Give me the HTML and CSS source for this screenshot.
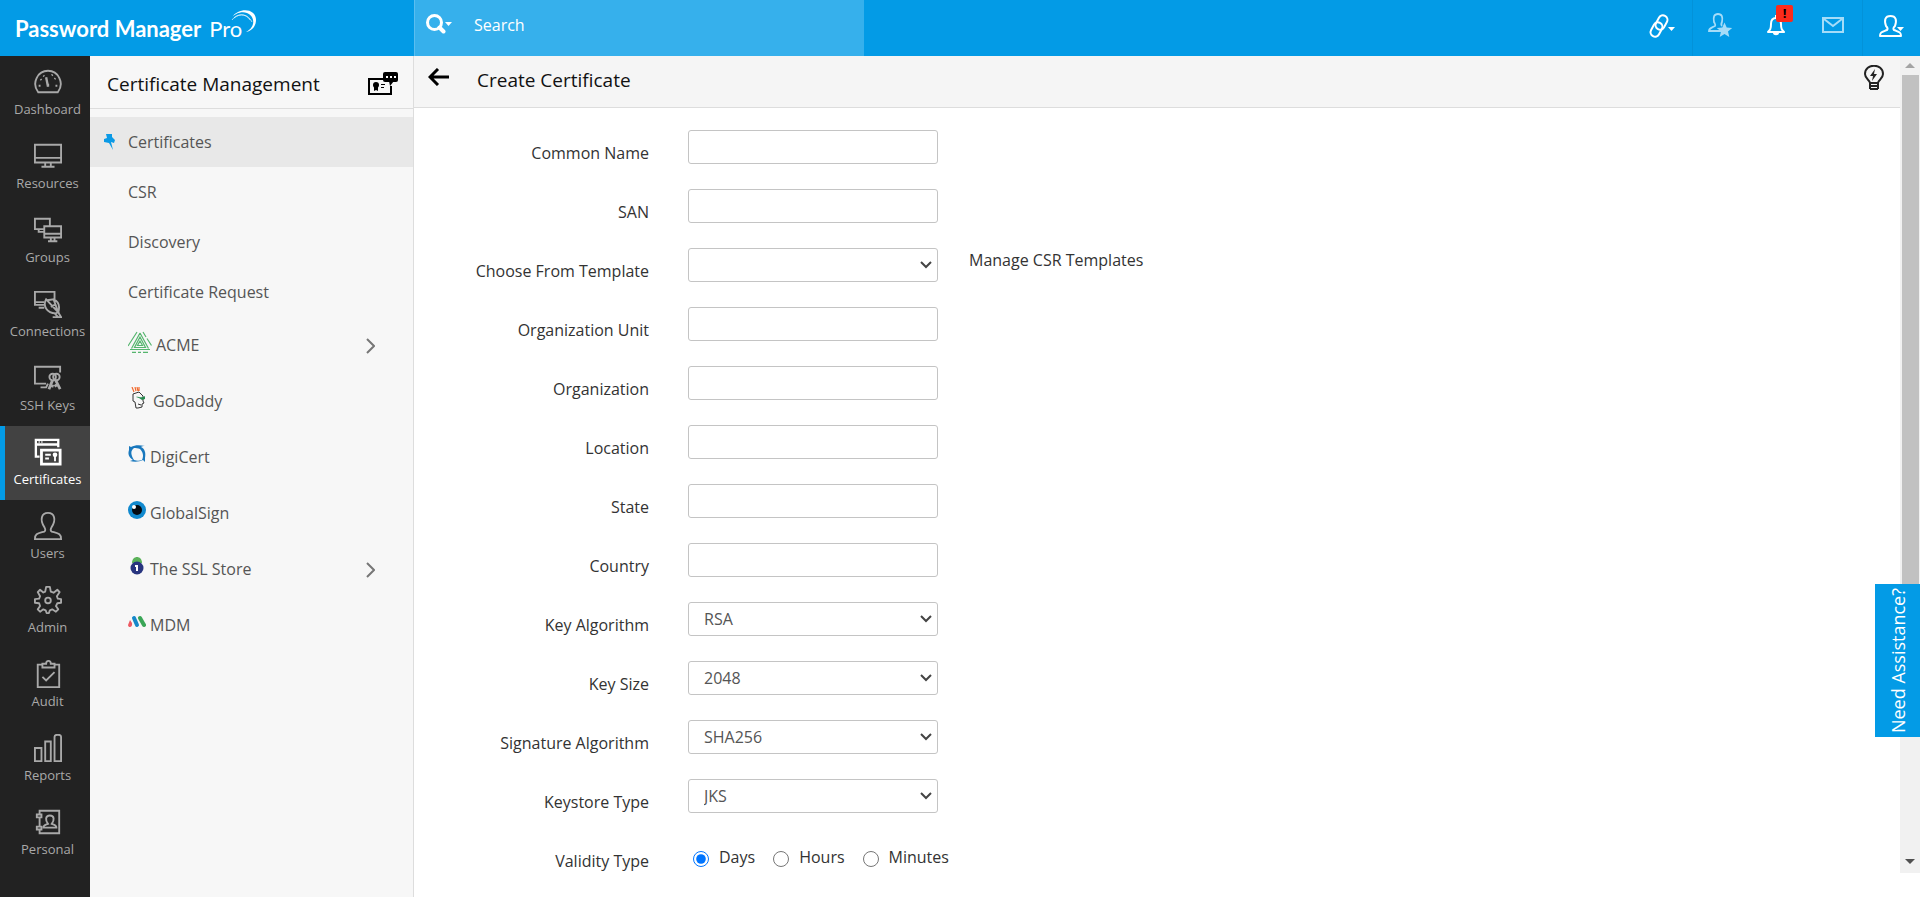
FILE: index.html
```html
<!DOCTYPE html>
<html lang="en">
  <head>
    <meta charset="utf-8" />
    <title>Password Manager Pro</title>
    <link rel="stylesheet" href="styles.css">
  </head>

  <body>
    <header class="topbar">
      <a class="logo" href="#">
        <b>Password Manager</b><span>Pro</span>
        <svg class="logo-swoosh" width="28" height="26" viewBox="0 0 28 26" fill="none" stroke="#fff">
          <path d="M2 8C9-2 26-1 26 11c0 6-4 11-10 12 10-5 9-16 1-19C11 2 5 5 2 8z" fill="#fff" stroke="none" />
          <path d="M2 11C7 4 16 4 20 11M4 9c6-5 14-4 18 4" stroke-width=".8" opacity=".8" />
        </svg>
      </a>
      <div class="search">
        <button class="search-type" aria-label="Search type">
          <svg width="26" height="20" viewBox="0 0 26 20" fill="none" stroke="#fff">
            <circle cx="8.500" cy="8.500" r="7" stroke-width="3" />
            <path d="M13.500 13.500l4 4" stroke-width="4" stroke-linecap="round" />
            <path d="M19 8h7l-3.500 4z" fill="#fff" stroke="none" />
          </svg>
        </button>
        <input class="search-input" type="text" placeholder="Search" aria-label="Search">
      </div>
      <div class="top-actions">
        <button class="top-btn link-btn" aria-label="Links">
          <svg width="26" height="25" viewBox="0 0 26 25" fill="none" stroke="#fff" stroke-width="2">
            <rect x="8" y="1" width="9" height="15" rx="4.500" transform="rotate(28 12.500 8.500)" />
            <rect x="3" y="8" width="9" height="15" rx="4.500" transform="rotate(28 7.500 15.500)" />
            <path d="M19 13h7l-3.500 4z" fill="#fff" stroke="none" />
          </svg>
        </button>
        <button class="top-btn star-btn" aria-label="Favourites">
          <svg width="26" height="25" viewBox="0 0 26 25" fill="none" stroke="#a5dcf8" stroke-width="1.800">
            <path d="M14 18H1c0-3 2-3 6-5 1-1 0-2-1-4-1-5 0-8 4-8s5 3 4 8c-1 2-1 3 0 4" />
            <path d="M16.500 9.500l2.200 5 5.500.5-4.200 3.600 1.300 5.400-4.800-2.900-4.800 2.900 1.300-5.400-4.200-3.600 5.500-.5z" fill="#a5dcf8" stroke="none" />
          </svg>
        </button>
        <button class="top-btn bell-btn" aria-label="Notifications">
          <svg width="18" height="22" viewBox="0 0 18 22" fill="none" stroke="#fff" stroke-width="2">
            <path d="M1 18c2-2 3-3 3-8 0-4 2-6 5-6s5 2 5 6c0 5 1 6 3 8z" stroke-linejoin="round" />
            <path d="M9 4V1" />
            <path d="M6 19h6c0 3-6 3-6 0z" fill="#fff" stroke="none" />
          </svg>
          <span class="badge">!</span>
        </button>
        <button class="top-btn mail-btn" aria-label="Messages">
          <svg width="22" height="16" viewBox="0 0 22 16" fill="none" stroke="#a5dcf8" stroke-width="2">
            <path d="M1 1h20v14H1zM2 2l9 7 9-7" />
          </svg>
        </button>
        <button class="top-btn user-btn" aria-label="Account">
          <svg width="26" height="23" viewBox="0 0 26 23" fill="none" stroke="#fff" stroke-width="2">
            <path d="M1 21c0-4 2-4 7-6 1-1 1-2-1-4C5 5 6 1 11.500 1S18 5 16 11c-2 2-2 3-1 4 5 2 7 2 7 6z" stroke-linejoin="round" />
            <path d="M18 12h7l-3.500 4z" fill="#fff" stroke="none" />
          </svg>
        </button>
      </div>
    </header>

    <div class="page">
      <nav class="sidebar">
        <a class="nav-item" href="#">
          <svg class="nav-icon" viewBox="0 0 30 30">
            <path d="M4.500 26C-3 16 4 3 15 3s18 13 10.500 23z" />
            <path d="M13 10l2 10M15 17v3" stroke-width="2.500" />
            <path d="M5 19h2M23 19h2M7 12l1 1M22 12l1-1M10 8l1 1M19 8l1-1" />
          </svg>
          Dashboard
        </a>
        <a class="nav-item" href="#">
          <svg class="nav-icon" viewBox="0 0 30 30">
            <path d="M1 3h28v19H1zM1 17h28M12 22v4M18 22v4M8 26.500h14" />
          </svg>
          Resources
        </a>
        <a class="nav-item" href="#">
          <svg class="nav-icon" viewBox="0 0 30 30">
            <path d="M10 14H1V3h16v7M5 14v3h5M11 11h18v12H11zM11 19h18M18 23v3M22 23v3M15 27h10" />
          </svg>
          Groups
        </a>
        <a class="nav-item" href="#">
          <svg class="nav-icon" viewBox="0 0 30 30">
            <path d="M11 16H1V2h21v8M1 13h10M5 19h6" />
            <path d="M13 10c-4 7 1 15 10 15l3-1zM14 11l7-1 5 14M21 10c5 2 7 7 5 14M22 25l4 4M20 29h9l-3-5M18 18l4-2" />
          </svg>
          Connections
        </a>
        <a class="nav-item" href="#">
          <svg class="nav-icon" viewBox="0 0 30 30">
            <path d="M13 21H1V3h27v6M7 25h6l2-4" />
            <circle cx="20" cy="14" r="3.500" /><circle cx="24" cy="14" r="3.500" />
            <path d="M20 17l-4 10M18 23l3 1M23 17l5 10M25 22l-3 2" stroke-width="3" />
          </svg>
          SSH Keys
        </a>
        <a class="nav-item active" href="#">
          <svg class="nav-icon" viewBox="0 0 30 30">
            <path d="M6 20H2V2h24v8M3 7h22M5 4h1M8 4h1" stroke-width="2.500" />
            <path d="M8 13h20v15H8z" stroke-width="3" /><path d="M12 18h6M12 22h4" />
            <circle cx="22.500" cy="18" r="2.500" fill="currentColor" stroke="none" /><path d="M22.500 19v6" />
          </svg>
          Certificates
        </a>
        <a class="nav-item" href="#">
          <svg class="nav-icon" viewBox="0 0 30 30">
            <path d="M1 29c0-6 3-6 10-8 2-1 1-3 0-5C6 8 8 1 15 1s9 7 4 15c-1 2-2 4 0 5 7 2 10 2 10 8z" />
          </svg>
          Users
        </a>
        <a class="nav-item" href="#">
          <svg class="nav-icon" viewBox="0 0 30 30">
            <path d="M13 1h4l1 5 3 1.200L25 4l2.500 2.500L24.500 11l1 2.500 3.500.5v4l-4 .5-1.500 3L26 25l-2.500 2.500L19.500 25 17 26l-1 3h-2.500L12.500 26 10 25l-3.500 2.500L4 25l2.500-3.500L5.500 18.500 1 18v-4l4.500-.5L6.500 11 4 6.500 6.500 4 10 7l2-1z" stroke-linejoin="round" />
            <circle cx="15" cy="15.500" r="3" />
          </svg>
          Admin
        </a>
        <a class="nav-item" href="#">
          <svg class="nav-icon" viewBox="0 0 30 30">
            <path d="M9 5H4v24h23V5h-5M9 8V4h4c0-4 5-4 5 0h4v4zM9 18l4 4 9-9" />
          </svg>
          Audit
        </a>
        <a class="nav-item" href="#">
          <svg class="nav-icon" viewBox="0 0 30 30">
            <path d="M1 15h7v14H1zM12 8h6v21h-6zM22 3c0-3 7-3 7 0v26h-7z" />
          </svg>
          Reports
        </a>
        <a class="nav-item" href="#">
          <svg class="nav-icon" viewBox="0 0 30 30">
            <path d="M6 6V3h21v24H6v-3M6 11v9M3 7h5v3H3zM3 20h5v3H3z" />
            <path d="M10 21c0-3 3-3 5-4-3-4-3-9 2-9s5 5 2 9c2 1 5 1 5 4z" />
          </svg>
          Personal
        </a>
      </nav>

      <aside class="panel">
        <div class="panel-head">
          <h2>Certificate Management</h2>
          <svg width="31" height="24" viewBox="0 0 31 24">
            <path d="M15 7H1v15h22v-8" fill="none" stroke="#000" stroke-width="2" />
            <rect x="15" y="0" width="15" height="10" rx="2" />
            <path d="M21 9h5l-4 5z" />
            <circle cx="8" cy="13" r="3" /><path d="M6 14h4v5l-2-1-2 1zM13 12h4v1h-4zM13 15h3v1h-3z" />
            <path d="M18 4h2v2h-2zM22 4h2v2h-2zM26 4h2v2h-2z" fill="#fff" />
          </svg>
        </div>
        <ul class="menu">
          <li>
            <a class="menu-item selected" href="#">
              <svg class="pin" width="13" height="16" viewBox="0 0 13 16">
                <path d="M3 0h6v3l3 3-1 3-3-1 2 8-4-7-5-1V5l3-1z" fill="#0b9ae6" />
              </svg>
              Certificates
            </a>
          </li>
          <li><a class="menu-item" href="#">CSR</a></li>
          <li><a class="menu-item" href="#">Discovery</a></li>
          <li><a class="menu-item" href="#">Certificate Request</a></li>
          <li>
            <a class="menu-item vendor" href="#">
              <svg width="24" height="22" viewBox="0 0 24 22" fill="none" stroke="#55b56e" stroke-width="1.200">
                <path d="M12 10l2.500 4.500h-5zM12 6l5.500 10.500h-11zM12 2L3.500 17.500M12 2l8.500 15.500" />
                <path d="M9 1L0 15M15 1l3 5M19 7.500l4.500 7M2 18.500h20M4 21.400h4M10 21.400h3M15 21.400h5" />
              </svg>
              ACME
              <svg class="chevron" width="9" height="16" viewBox="0 0 9 16"><path d="M1 1l7 7-7 7" /></svg>
            </a>
          </li>
          <li>
            <a class="menu-item vendor" href="#">
              <svg width="21" height="22" viewBox="0 0 21 22" fill="none" stroke="#333">
                <path d="M4 0l2 5M7 0l1 4M9 0l1 4M11 0v4" stroke="#f26a2e" stroke-width="1.200" />
                <path d="M5 7l6-2 4 4v5l1 2-2 1v3l-4 1H8l-1-6-2-1zM10 17l3 1" />
                <path d="M8 10c2-1 5 2 9-1v3l-3 1-3-2z" fill="#278b50" stroke="none" />
              </svg>
              GoDaddy
            </a>
          </li>
          <li>
            <a class="menu-item vendor" href="#">
              <svg width="18" height="18" viewBox="0 0 18 18">
                <path d="M1 1l2 1c4-2 8-2 14-1-2 0-3 0-4 1 4 2 5 6 4 11v4l-2-2c-4 2-9 2-13 1l3-1C0 12 0 8 1 5zM6 3C2 6 3 10 6 15c3 1 5 1 8 0 2-4 1-8-2-11-2-1-4-1-6-1z" fill="#1978bd" fill-rule="evenodd" />
              </svg>
              DigiCert
            </a>
          </li>
          <li>
            <a class="menu-item vendor" href="#">
              <svg width="18" height="18" viewBox="0 0 18 18">
                <circle cx="9" cy="9" r="9" fill="#1189ce" />
                <circle cx="9" cy="9" r="5" fill="#050b12" />
                <circle cx="6" cy="6" r="2" fill="#fff" />
              </svg>
              GlobalSign
            </a>
          </li>
          <li>
            <a class="menu-item vendor" href="#">
              <svg width="18" height="18" viewBox="0 0 18 18">
                <path d="M4 6c0-8 10-8 10 0z" fill="#5bb25a" />
                <circle cx="9" cy="11" r="6.500" fill="#28357f" />
                <path d="M7 8h3v6H8v-4H7z" fill="#fff" />
              </svg>
              The SSL Store
              <svg class="chevron" width="9" height="16" viewBox="0 0 9 16"><path d="M1 1l7 7-7 7" /></svg>
            </a>
          </li>
          <li>
            <a class="menu-item vendor" href="#">
              <svg width="18" height="18" viewBox="0 0 18 18" stroke-linecap="round" stroke-width="4">
                <path d="M2 7l2 3c1 5-4 5-4 2z" fill="#ee5a63" />
                <path d="M6 5l3 7" stroke="#1688c9" />
                <path d="M12 5l4 7" stroke="#3aa657" />
              </svg>
              MDM
            </a>
          </li>
        </ul>
      </aside>

      <main class="content">
        <div class="content-scroll">
          <div class="content-head">
            <button class="back" aria-label="Back">
              <svg width="22" height="18" viewBox="0 0 22 18" fill="none" stroke="#000" stroke-width="3">
                <path d="M21 9H3M10 1L2 9l8 8" />
              </svg>
            </button>
            <h1>Create Certificate</h1>
            <button class="hint" aria-label="Help">
              <svg width="20" height="26" viewBox="0 0 20 26" fill="none" stroke="#222" stroke-width="2">
                <path d="M6 18c0-3-5-4-5-9 0-11 18-11 18 0 0 5-5 6-5 9z" />
                <path d="M5 18h10M6 21h8M6 24h8M6 18v6M14 18v6" />
                <path d="M11 4l-5 7h3l-1 5 5-7h-3z" fill="#222" stroke="none" />
              </svg>
            </button>
          </div>

          <form class="cert-form">
            <div class="row">
              <label for="commonName">Common Name</label>
              <input class="field" type="text" id="commonName">
            </div>
            <div class="row">
              <label for="san">SAN</label>
              <input class="field" type="text" id="san">
            </div>
            <div class="row">
              <label for="template">Choose From Template</label>
              <select class="field" id="template"><option></option></select>
              <a class="templates" href="#">Manage CSR Templates</a>
            </div>
            <div class="row">
              <label for="orgUnit">Organization Unit</label>
              <input class="field" type="text" id="orgUnit">
            </div>
            <div class="row">
              <label for="org">Organization</label>
              <input class="field" type="text" id="org">
            </div>
            <div class="row">
              <label for="location">Location</label>
              <input class="field" type="text" id="location">
            </div>
            <div class="row">
              <label for="state">State</label>
              <input class="field" type="text" id="state">
            </div>
            <div class="row">
              <label for="country">Country</label>
              <input class="field" type="text" id="country">
            </div>
            <div class="row">
              <label for="keyAlgorithm">Key Algorithm</label>
              <select class="field" id="keyAlgorithm"><option>RSA</option></select>
            </div>
            <div class="row">
              <label for="keySize">Key Size</label>
              <select class="field" id="keySize"><option>2048</option></select>
            </div>
            <div class="row">
              <label for="signature">Signature Algorithm</label>
              <select class="field" id="signature"><option>SHA256</option></select>
            </div>
            <div class="row">
              <label for="keystore">Keystore Type</label>
              <select class="field" id="keystore"><option>JKS</option></select>
            </div>
            <div class="row" role="radiogroup" aria-labelledby="validityLabel">
              <span class="row-label" id="validityLabel">Validity Type</span>
              <div class="radios">
                <input type="radio" name="validity" id="days" checked><label for="days">Days</label>
                <input type="radio" name="validity" id="hours"><label for="hours">Hours</label>
                <input type="radio" name="validity" id="minutes"><label for="minutes">Minutes</label>
              </div>
            </div>
          </form>
        </div>

        <div class="scrollbar">
          <i class="arrow-up"></i>
          <div class="thumb"></div>
          <i class="arrow-down"></i>
        </div>
      </main>
    </div>

    <button class="assistance">Need Assistance?</button>
  </body>
</html>
```
FILE: styles.css
```css
* {
  box-sizing: border-box;
  margin: 0;
  padding: 0;
}
body {
  display: flex;
  flex-direction: column;
  height: 100vh;
  overflow: hidden;
  font: 16px/24px "Open Sans", sans-serif;
  color: #333;
  background: #fff;
}
a {
  color: inherit;
  text-decoration: none;
}
button {
  border: 0;
  background: none;
  font: inherit;
}
ul {
  list-style: none;
}
svg {
  display: block;
  flex-shrink: 0;
}

/* top bar */
.topbar {
  display: flex;
  flex-shrink: 0;
  height: 56px;
  background: #039be6;
  color: #fff;
}
.logo {
  display: flex;
  gap: 8px;
  width: 414px;
  padding: 17px 0 0 15px;
  font-family: Lato, sans-serif;
  font-size: 22px;
}
.logo-swoosh {
  margin: -8px 0 0 -20px;
}
.search {
  display: flex;
  align-items: center;
  width: 450px;
  padding: 0 11px;
  background: #36b0ec;
  border-left: 1px solid #5abef0;
}
.search-type {
  margin-right: 22px;
  padding-bottom: 8px;
}
.search-input {
  flex: 1;
  height: 36px;
  padding-bottom: 6px;
  border: 0;
  outline: 0;
  background: none;
  color: #fff;
  font: inherit;
}
.search-input::placeholder {
  color: #fff;
}
.top-actions {
  display: flex;
  margin-left: auto;
}
.top-btn {
  display: flex;
  align-items: center;
  justify-content: center;
  width: 56px;
  padding-bottom: 6px;
  border-left: 0 solid #0392d9;
}
.link-btn {
  width: 60px;
  padding-bottom: 3px;
}
.star-btn {
  border-left-width: 1px;
}
.bell-btn {
  position: relative;
}
.mail-btn {
  width: 58px;
}
.user-btn {
  width: 58px;
  padding-bottom: 4px;
  border-left-width: 1px;
}
.badge {
  position: absolute;
  top: 5px;
  right: 11px;
  width: 17px;
  height: 17px;
  border-radius: 2px;
  background: #fb2b1c;
  font-size: 13px;
  line-height: 16px;
  font-weight: 700;
}

.page {
  display: flex;
  flex: 1;
  min-height: 0;
}

/* left navigation */
.sidebar {
  flex-shrink: 0;
  width: 90px;
  background: #222;
}
.nav-item {
  display: flex;
  flex-direction: column;
  align-items: center;
  height: 74px;
  padding: 12px 0 0 5px;
  font-size: 13px;
  color: #a9a9a9;
}
.nav-icon {
  width: 28px;
  height: 28px;
  margin-bottom: 1px;
  fill: none;
  stroke: currentColor;
  stroke-width: 2;
}
.nav-item.active {
  padding-left: 0;
  border-left: 5px solid #039be6;
  background: #424242;
  color: #fff;
}

/* certificate menu */
.panel {
  flex-shrink: 0;
  width: 324px;
  border-right: 1px solid #ddd;
  background: #f7f7f7;
}
.panel-head {
  display: flex;
  align-items: center;
  justify-content: space-between;
  height: 53px;
  margin-bottom: 8px;
  padding: 4px 14px 0 17px;
  border-bottom: 1px solid #ddd;
  color: #111;
}
.panel-head h2 {
  font-size: 19px;
  font-weight: 400;
}
.menu-item {
  display: flex;
  align-items: center;
  gap: 4px;
  height: 50px;
  padding: 0 38px;
  color: #555;
}
.menu-item.selected {
  gap: 12px;
  padding-left: 13px;
  background: #e8e8e8;
}
.menu-item.vendor {
  height: 56px;
}
.menu-item.vendor svg {
  margin-bottom: 7px;
}
.menu-item.vendor .chevron {
  margin: 2px 0 0 auto;
  fill: none;
  stroke: #777;
  stroke-width: 2;
}

/* certificate form */
.content {
  display: flex;
  flex: 1;
  min-width: 0;
}
.content-scroll {
  flex: 1;
  overflow: hidden;
}
.content-head {
  display: flex;
  align-items: flex-start;
  height: 52px;
  padding: 12px 16px 0 14px;
  border-bottom: 1px solid #ddd;
  background: #f5f5f5;
  color: #111;
}
.content-head h1 {
  margin-left: 27px;
  font-size: 19px;
  font-weight: 400;
}
.hint {
  margin: -3px 0 0 auto;
}
.cert-form {
  padding-top: 22px;
}
.row {
  display: flex;
  height: 59px;
}
.row > label,
.row-label {
  width: 235px;
  margin-right: 39px;
  padding-top: 11px;
  text-align: right;
}
.field {
  width: 250px;
  height: 34px;
  padding: 0 15px;
  border: 1px solid #c4c4c4;
  border-radius: 3px;
  background: #fff;
  color: #555;
  font: inherit;
}
select.field {
  appearance: none;
  background: #fff url("data:image/svg+xml,%3Csvg xmlns='http://www.w3.org/2000/svg' width='12' height='8'%3E%3Cpath d='M1 1l5 5 5-5' fill='none' stroke='%23444' stroke-width='2'/%3E%3C/svg%3E") no-repeat right 5px center;
}
.templates {
  margin-left: 31px;
}
.radios {
  display: flex;
  align-items: center;
  height: 38px;
  padding-left: 5px;
}
.radios input {
  width: 16px;
  height: 16px;
  margin: 3px 10px 0 0;
}
.radios label {
  margin-right: 18px;
}

.scrollbar {
  display: flex;
  flex-direction: column;
  align-items: center;
  width: 20px;
  margin-bottom: 24px;
  padding: 7px 0 9px;
  background: #f1f1f1;
}
.thumb {
  width: 17px;
  height: 66%;
  margin: 7px 0 auto;
  background: #c1c1c1;
}
.arrow-up,
.arrow-down {
  border: 5px solid transparent;
}
.arrow-up {
  border-top: 0;
  border-bottom: 5px solid #a3a3a3;
}
.arrow-down {
  border-top: 5px solid #505050;
  border-bottom: 0;
}

.assistance {
  position: fixed;
  right: 0;
  bottom: 160px;
  width: 45px;
  height: 153px;
  background: #039be6;
  color: #fff;
  font-size: 18px;
  writing-mode: sideways-lr;
}
```
